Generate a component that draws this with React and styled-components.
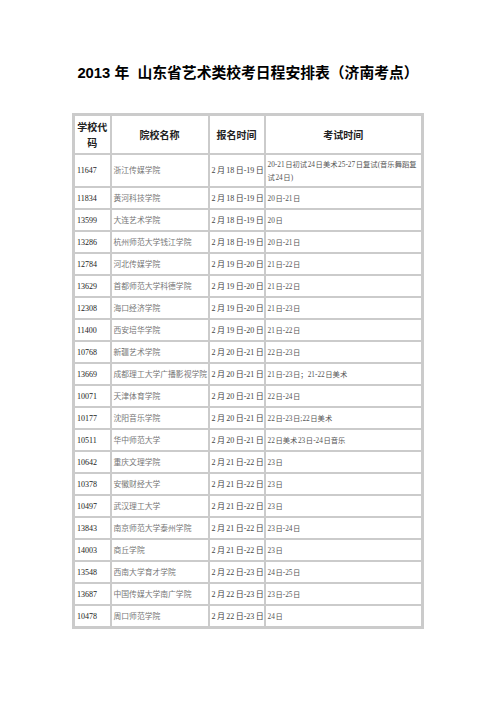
import React from "react"
import styled, {createGlobalStyle} from "styled-components"

const GlobalStyle = createGlobalStyle`
  body {
    margin: 0;
    background: #fff;
    font-family: "Liberation Serif", "Noto Sans CJK SC", serif;
  }
`

const Page = styled.div`
  width: 496px;
  height: 702px;
  display: flex;
  flex-direction: column;
  align-items: center;
  padding-top: 63px;
  box-sizing: border-box;
`

const Title = styled.h1`
  margin: 0 0 30px;
  font-family: "Liberation Sans", "Noto Sans CJK SC", sans-serif;
  font-size: 14.8px;
  font-weight: bold;
  line-height: 20px;
  color: #000;
  white-space: pre;
`

const Table = styled.table`
  width: 352px;
  border-collapse: collapse;
  border: 3px solid #cbcbcb;
  table-layout: fixed;
`

const HeadCell = styled.th`
  height: 33px;
  padding: 2px 1px;
  border: 2px solid #cbcbcb;
  font-family: "Noto Sans CJK SC", sans-serif;
  font-size: 10px;
  font-weight: bold;
  line-height: 16px;
  color: #222;
  text-align: center;
  vertical-align: middle;
  word-break: break-all;
`

const Cell = styled.td`
  height: ${(p) => (p.$tall ? 31 : 20)}px;
  padding: 0 0 0 2px;
  border: 2px solid #cbcbcb;
  font-size: ${(p) => p.$size || 8}px;
  line-height: 13px;
  word-spacing: ${(p) => p.$ws || 0}px;
  color: ${(p) => p.$color || "#333"};
  vertical-align: middle;
  white-space: ${(p) => (p.$wrap ? "normal" : "nowrap")};
  overflow: hidden;
  word-break: break-all;
`

const rows = [
  ["11647", "浙江传媒学院", "2 月 18 日-19 日", "20-21 日初试 24 日美术 25-27 日复试(音乐舞蹈复试 24 日)"],
  ["11834", "黄河科技学院", "2 月 18 日-19 日", "20 日-21 日"],
  ["13599", "大连艺术学院", "2 月 18 日-19 日", "20 日"],
  ["13286", "杭州师范大学钱江学院", "2 月 18 日-19 日", "20 日-21 日"],
  ["12784", "河北传媒学院", "2 月 19 日-20 日", "21 日-22 日"],
  ["13629", "首都师范大学科德学院", "2 月 19 日-20 日", "21 日-22 日"],
  ["12308", "海口经济学院", "2 月 19 日-20 日", "21 日-23 日"],
  ["11400", "西安培华学院", "2 月 19 日-20 日", "21 日-22 日"],
  ["10768", "新疆艺术学院", "2 月 20 日-21 日", "22 日-23 日"],
  ["13669", "成都理工大学广播影视学院", "2 月 20 日-21 日", "21 日-23 日；21-22 日美术"],
  ["10071", "天津体育学院", "2 月 20 日-21 日", "22 日-24 日"],
  ["10177", "沈阳音乐学院", "2 月 20 日-21 日", "22 日-23 日;22 日美术"],
  ["10511", "华中师范大学", "2 月 20 日-21 日", "22 日美术 23 日-24 日音乐"],
  ["10642", "重庆文理学院", "2 月 21 日-22 日", "23 日"],
  ["10378", "安徽财经大学", "2 月 21 日-22 日", "23 日"],
  ["10497", "武汉理工大学", "2 月 21 日-22 日", "23 日"],
  ["13843", "南京师范大学泰州学院", "2 月 21 日-22 日", "23 日-24 日"],
  ["14003", "商丘学院", "2 月 21 日-22 日", "23 日"],
  ["13548", "西南大学育才学院", "2 月 22 日-23 日", "24 日-25 日"],
  ["13687", "中国传媒大学南广学院", "2 月 22 日-23 日", "23 日-25 日"],
  ["10478", "周口师范学院", "2 月 22 日-23 日", "24 日"],
]

export default function App() {
  return (
    <Page>
      <GlobalStyle />
      <Title>{"2013 年  山东省艺术类校考日程安排表（济南考点）"}</Title>
      <Table>
        <colgroup>
          <col style={{width: 37}} />
          <col style={{width: 98}} />
          <col style={{width: 56}} />
          <col />
        </colgroup>
        <thead>
          <tr>
            <HeadCell>学校代码</HeadCell>
            <HeadCell>院校名称</HeadCell>
            <HeadCell>报名时间</HeadCell>
            <HeadCell>考试时间</HeadCell>
          </tr>
        </thead>
        <tbody>
          {rows.map((r, i) => (
            <tr key={r[0]}>
              <Cell $tall={i === 0} $color="#222">{r[0]}</Cell>
              <Cell $tall={i === 0} $color="#777" $size={7.8}>{r[1]}</Cell>
              <Cell $tall={i === 0} $color="#444" $ws={-0.6}>{r[2]}</Cell>
              <Cell $tall={i === 0} $color="#555" $size={7.3} $ws={-1.2} $wrap>
                {r[3]}
              </Cell>
            </tr>
          ))}
        </tbody>
      </Table>
    </Page>
  )
}
